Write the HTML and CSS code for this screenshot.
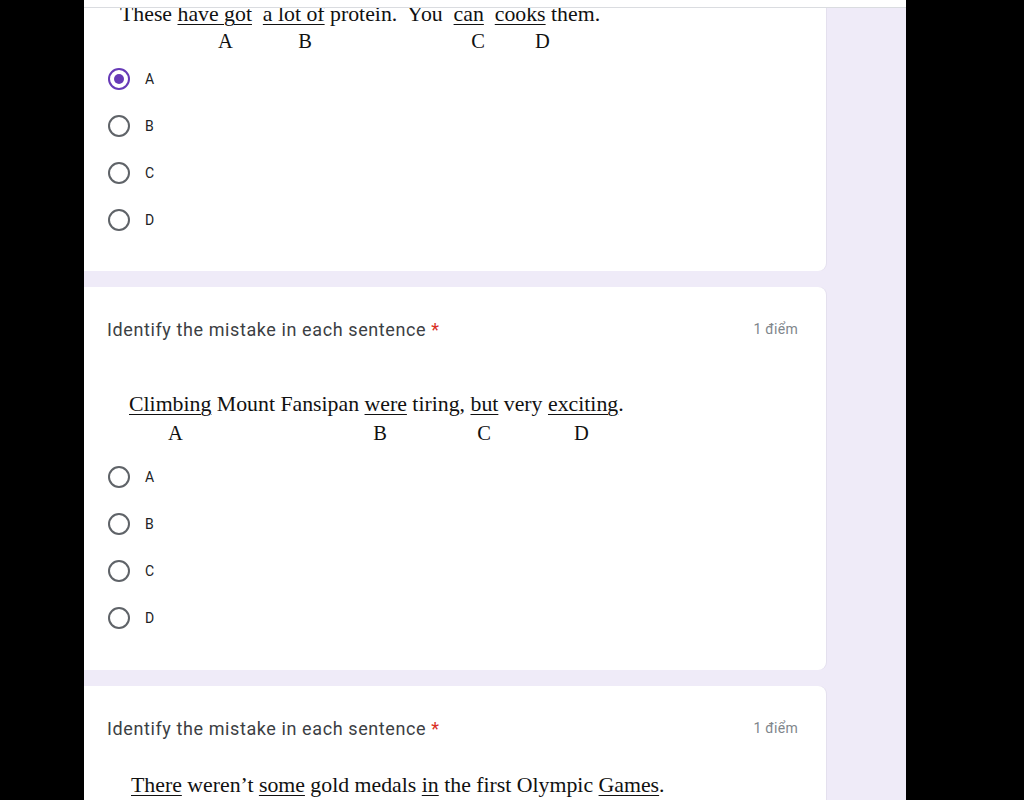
FILE: index.html
```html
<!DOCTYPE html>
<html lang="vi">
<head>
<meta charset="utf-8">
<title>Form</title>
<link rel="stylesheet" href="styles.css">
</head>
<body>
<div class="frame">
  <div class="topbar"></div>
  <div class="list">
    <section class="card card1">
      <div class="sentence s1"><span>These </span><u>have got</u><span>  </span><u>a lot of</u><span> protein.  You  </span><u>can</u><span>  </span><u>cooks</u><span> them.</span></div>
      <div class="letters l1"><span class="c1a">A</span><span class="c1b">B</span><span class="c1c">C</span><span class="c1d">D</span></div>
      <div class="options">
        <div class="opt"><span class="radio checked"></span><span class="lbl">A</span></div>
        <div class="opt"><span class="radio"></span><span class="lbl">B</span></div>
        <div class="opt"><span class="radio"></span><span class="lbl">C</span></div>
        <div class="opt"><span class="radio"></span><span class="lbl">D</span></div>
      </div>
    </section>

    <section class="card card2">
      <div class="qhead"><div class="qtitle">Identify the mistake in each sentence <span class="req">*</span></div><div class="pts">1 điểm</div></div>
      <div class="sentence s2"><u>Climbing</u> Mount Fansipan <u>were</u> tiring, <u>but</u> very <u>exciting</u>.</div>
      <div class="letters l2"><span class="c2a">A</span><span class="c2b">B</span><span class="c2c">C</span><span class="c2d">D</span></div>
      <div class="options">
        <div class="opt"><span class="radio"></span><span class="lbl">A</span></div>
        <div class="opt"><span class="radio"></span><span class="lbl">B</span></div>
        <div class="opt"><span class="radio"></span><span class="lbl">C</span></div>
        <div class="opt"><span class="radio"></span><span class="lbl">D</span></div>
      </div>
    </section>

    <section class="card card3">
      <div class="qhead"><div class="qtitle">Identify the mistake in each sentence <span class="req">*</span></div><div class="pts">1 điểm</div></div>
      <div class="sentence s3"><u>There</u> weren’t <u>some</u> gold medals <u>in</u> the first Olympic <u>Games</u>.</div>
    </section>
  </div>
</div>
</body>
</html>
```

FILE: styles.css
```css
html, body {
  margin: 0;
  padding: 0;
  background: #000;
  height: 800px;
  overflow: hidden;
}
.frame {
  margin-left: 84px;
  width: 822px;
  height: 800px;
  background: #efebf8;
  position: relative;
  overflow: hidden;
}
.topbar {
  position: relative;
  z-index: 2;
  height: 7px;
  background: #fff;
  border-bottom: 1px solid #dadce0;
}
.list {
  display: flex;
  flex-direction: column;
  gap: 16px;
  width: 742px;
  margin-top: -8px;
}
.card {
  background: #fff;
  border-radius: 0 8px 8px 0;
  box-shadow: 1px 0 0 #e4e0ee;
}
.card1 {
  padding-bottom: 28px;
}
.card2 {
  padding-top: 30px;
  padding-bottom: 29px;
}
.card3 {
  padding-top: 30px;
  height: 200px;
}
.qhead {
  display: flex;
  justify-content: space-between;
  align-items: center;
  padding: 0 28px 0 23px;
  height: 24px;
}
.qtitle {
  font-family: Roboto, "Noto Sans", sans-serif;
  font-size: 18px;
  color: #3c4043;
  letter-spacing: 0.6px;
}
.req {
  color: #d93025;
}
.pts {
  font-family: Roboto, "Noto Sans", sans-serif;
  font-size: 14px;
  color: #80868b;
  letter-spacing: 0.3px;
}
.sentence {
  font-family: "Liberation Serif", "Times New Roman", serif;
  font-size: 21.8px;
  line-height: 28px;
  color: #111;
  white-space: pre;
}
.sentence u {
  text-decoration-thickness: 1px;
  text-underline-offset: 3px;
}
.s1 { padding-left: 36px; }
.s2 { padding-left: 45px; margin-top: 49px; }
.s3 { padding-left: 47px; margin-top: 31px; }
.letters {
  font-family: "Liberation Serif", "Times New Roman", serif;
  font-size: 20.5px;
  line-height: 28px;
  color: #111;
  display: flex;
}
.letters span {
  width: 14px;
  text-align: center;
}
.l1 { margin-top: -1px; }
.c1a { margin-left: 134px; }
.c1b { margin-left: 66px; }
.c1c { margin-left: 159px; }
.c1d { margin-left: 50px; }
.l2 { margin-top: 1px; }
.c2a { margin-left: 84px; }
.c2b { margin-left: 191px; }
.c2c { margin-left: 90px; }
.c2d { margin-left: 83px; }
.options {
  display: flex;
  flex-direction: column;
  padding-left: 24px;
}
.card2 .options { margin-top: 6px; }
.opt {
  height: 47px;
  display: flex;
  align-items: center;
}
.radio {
  box-sizing: border-box;
  width: 22px;
  height: 22px;
  border: 2px solid #5f6368;
  border-radius: 50%;
  display: flex;
  align-items: center;
  justify-content: center;
}
.radio.checked {
  border-color: #673ab7;
}
.radio.checked::after {
  content: "";
  width: 10px;
  height: 10px;
  border-radius: 50%;
  background: #673ab7;
}
.lbl {
  font-family: Roboto, "Noto Sans", sans-serif;
  font-size: 14px;
  color: #202124;
  margin-left: 15px;
}
```
